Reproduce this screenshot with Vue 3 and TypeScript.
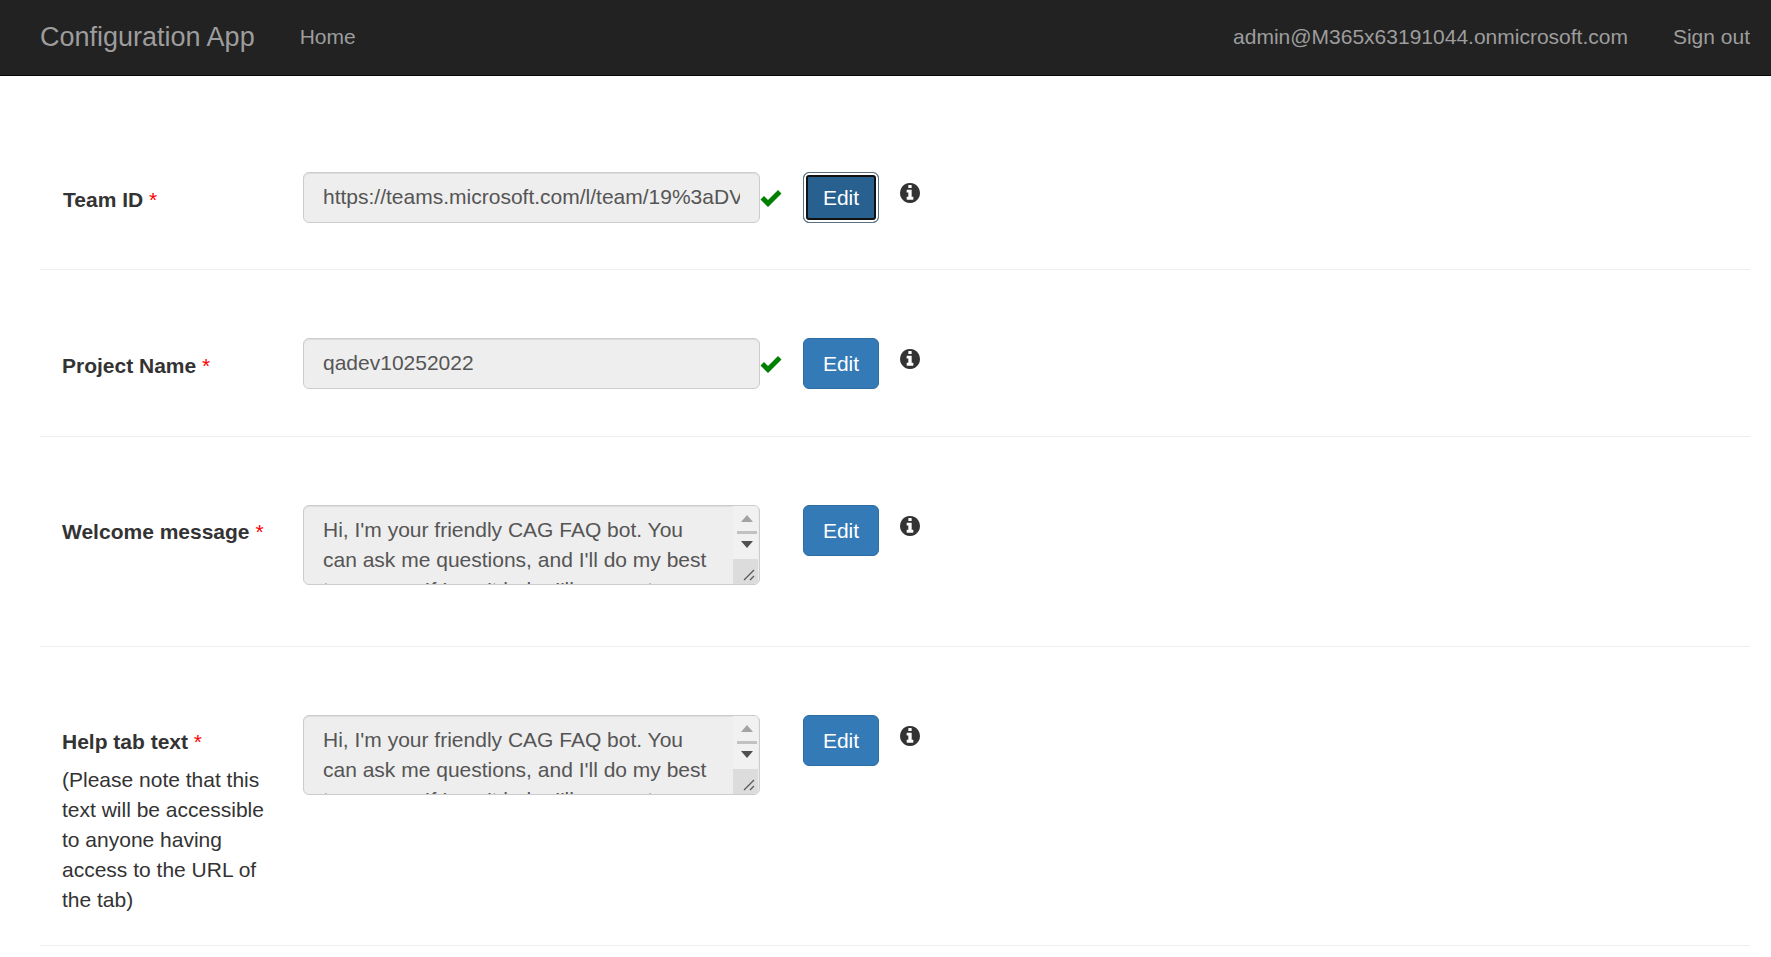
<template>
  <div class="page">
    <nav class="navbar">
      <a class="brand">Configuration App</a>
      <a class="nav-link">Home</a>
      <div class="nav-right">
        <a class="nav-link">admin@M365x63191044.onmicrosoft.com</a>
        <a class="nav-link signout">Sign out</a>
      </div>
    </nav>

    <main class="content">
      <section v-for="row in rows" :key="row.label" class="row" :class="row.rowClass">
        <div class="label-col">
          <label class="field-label">{{ row.label }} <span class="req">*</span></label>
          <p v-if="row.note" class="note">{{ row.note }}</p>
        </div>

        <div class="control-col">
          <div v-if="row.kind === 'input'" class="control input-box">
            <span class="input-text">{{ row.value }}</span>
          </div>
          <div v-else class="control area-box">
            <div class="area-text">{{ row.value }}</div>
            <div class="fake-scroll">
              <span class="arrow up"></span>
              <span class="thumb"></span>
              <span class="arrow down"></span>
              <span class="resizer">
                <svg width="25" height="25" viewBox="0 0 25 25">
                  <path d="M11 21 L21 11 M17 21 L21 17" stroke="#555" stroke-width="1.2" fill="none" />
                </svg>
              </span>
            </div>
          </div>
        </div>

        <div class="check-col">
          <svg v-if="row.checked" class="check" viewBox="0 0 22 20">
            <path d="M0.5 11.5 L4 8 L8 12 L18 2 L21.5 5.5 L8 19 Z" fill="#008000" />
          </svg>
        </div>

        <button class="edit-btn" :class="{ focused: row.focused }" type="button">Edit</button>

        <svg class="info" viewBox="0 0 1536 1536">
          <path
            fill="#333"
            d="M1024 1248v-160q0-14-9-23t-23-9h-96v-512q0-14-9-23t-23-9h-320q-14 0-23 9t-9 23v160q0 14 9 23t23 9h96v320h-96q-14 0-23 9t-9 23v160q0 14 9 23t23 9h448q14 0 23-9t9-23zm-128-896v-160q0-14-9-23t-23-9h-192q-14 0-23 9t-9 23v160q0 14 9 23t23 9h192q14 0 23-9t9-23zm640 416q0 209-103 385.5t-279.5 279.5-385.5 103-385.5-103-279.5-279.5-103-385.5 103-385.5 279.5-279.5 385.5-103 385.5 103 279.5 279.5 103 385.5z"
          />
        </svg>
      </section>
    </main>
  </div>
</template>

<script setup lang="ts">
interface Row {
  label: string;
  kind: 'input' | 'area';
  value: string;
  note?: string;
  checked?: boolean;
  focused?: boolean;
  rowClass?: string;
}

const botText =
  "Hi, I'm your friendly CAG FAQ bot. You can ask me questions, and I'll do my best to answer. If I can't help, I'll connect you to an expert.";

const rows: Row[] = [
  {
    label: 'Team ID',
    kind: 'input',
    value: 'https://teams.microsoft.com/l/team/19%3aDVxyz0123456789abcdef',
    checked: true,
    focused: true,
    rowClass: 'row-first',
  },
  { label: 'Project Name', kind: 'input', value: 'qadev10252022', checked: true, rowClass: 'row-second' },
  { label: 'Welcome message', kind: 'area', value: botText, rowClass: 'row-area' },
  {
    label: 'Help tab text',
    kind: 'area',
    value: botText,
    note: '(Please note that this text will be accessible to anyone having access to the URL of the tab)',
    rowClass: 'row-last',
  },
];
</script>

<style>
html,
body {
  margin: 0;
  background: #fff;
}
</style>

<style scoped>
.page {
  font-family: "Liberation Sans", Arial, sans-serif;
  font-size: 21px;
  line-height: 30px;
  color: #333;
}

.navbar {
  display: flex;
  align-items: center;
  height: 73px;
  padding: 0 21px 2px 40px;
  background: #222;
  border-bottom: 1px solid #080808;
}

.brand {
  font-size: 27px;
  color: #9d9d9d;
  margin-right: 45px;
}

.nav-link {
  color: #9d9d9d;
}

.nav-right {
  display: flex;
  gap: 45px;
  margin-left: auto;
}

.content {
  padding: 27px 21px 0 40px;
}

.row {
  display: flex;
  align-items: flex-start;
  padding: 68px 0 47px 22px;
  border-bottom: 1px solid #eee;
}

.row-first {
  padding-top: 69px;
  padding-bottom: 46px;
}

.row-first .field-label {
  margin: 1px 0 0 1px;
}

.row-second .field-label {
  margin-top: 1px;
}

.row-area {
  padding-bottom: 61px;
}

.row-last {
  padding-bottom: 30px;
}

.label-col {
  width: 241px;
  flex: none;
  padding-top: 12px;
}

.field-label {
  display: block;
  font-weight: 700;
}

.req {
  color: #f00;
  font-weight: 400;
}

.note {
  width: 205px;
  margin: 8px 0 0;
}

.control-col {
  width: 457px;
  flex: none;
}

.control {
  box-sizing: border-box;
  width: 457px;
  background: #eee;
  border: 1px solid #ccc;
  border-radius: 6px;
  box-shadow: inset 0 1px 1px rgba(0, 0, 0, 0.075);
  color: #555;
  overflow: hidden;
}

.input-box {
  height: 51px;
  padding: 9px 19px;
}

.input-text {
  display: block;
  white-space: nowrap;
  overflow: hidden;
}

.area-box {
  position: relative;
  height: 80px;
  padding: 9px 40px 0 19px;
}

.area-text {
  width: 392px;
}

.fake-scroll {
  position: absolute;
  top: 0;
  right: 1px;
  bottom: 0;
  width: 25px;
  background: #f1f1f1;
}

.arrow {
  position: absolute;
  left: 8px;
  width: 0;
  height: 0;
  border-left: 6px solid transparent;
  border-right: 6px solid transparent;
}

.arrow.up {
  top: 9px;
  border-bottom: 7px solid #a3a3a3;
}

.arrow.down {
  top: 35px;
  border-top: 7px solid #505050;
}

.thumb {
  position: absolute;
  top: 25px;
  left: 4px;
  width: 20px;
  height: 3px;
  background: #c1c1c1;
}

.resizer {
  position: absolute;
  right: 0;
  bottom: 0;
  width: 25px;
  height: 25px;
  background: #dcdcdc;
}

.resizer svg {
  display: block;
}

.check-col {
  width: 43px;
  flex: none;
  height: 50px;
}

.check {
  display: block;
  width: 22px;
  height: 20px;
  margin: 16px 0 0;
}

.edit-btn {
  box-sizing: border-box;
  flex: none;
  width: 76px;
  height: 51px;
  padding: 0;
  font: inherit;
  color: #fff;
  background: #337ab7;
  border: 1px solid #2e6da4;
  border-radius: 6px;
}

.edit-btn.focused {
  background: #286090;
  border-color: #5b7083;
  box-shadow: inset 0 0 0 2px #fff, inset 0 0 0 4px #111;
}

.info {
  flex: none;
  width: 20px;
  height: 20px;
  margin: 11px 0 0 21px;
}
</style>
